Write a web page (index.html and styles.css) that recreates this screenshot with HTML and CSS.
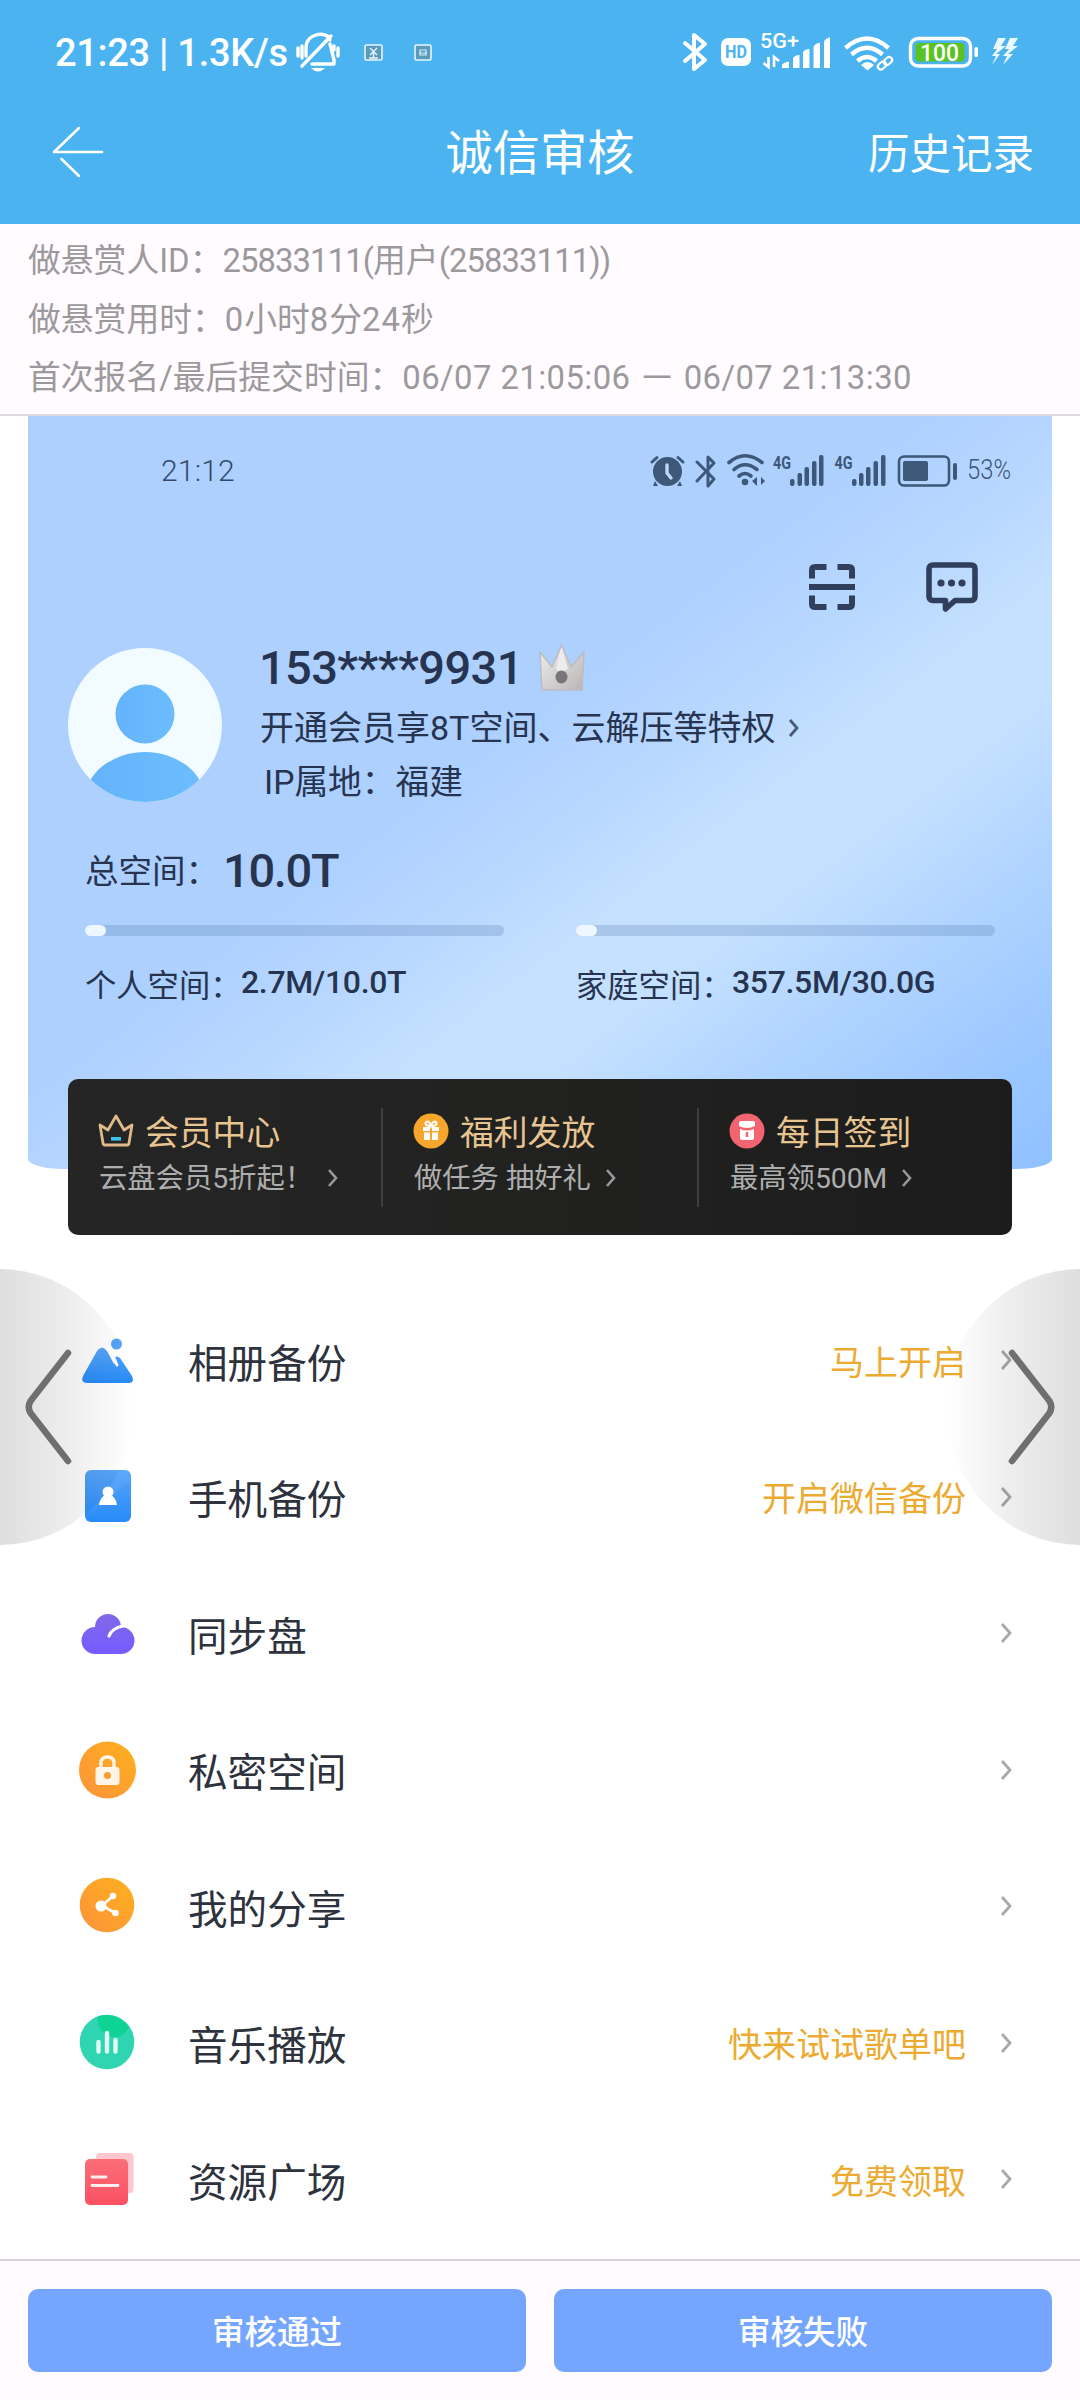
FILE: index.html
```html
<!DOCTYPE html>
<html lang="zh-CN">
<head>
<meta charset="utf-8">
<title>诚信审核</title>
<link rel="stylesheet" href="styles.css">
</head>
<body>
<div class="screen">
  <header class="top">
    <div class="sysbar">
      <span class="clock">21:23 | 1.3K/s</span>
      <svg class="sys-left" width="140" height="44" viewBox="294 30 140 44">
        <g fill="none" stroke="#fff" stroke-width="3.4" stroke-linecap="round" stroke-linejoin="round">
          <path d="M306 56V48C306 32 328 31 330 40M330 44L334 60V64H312M302 66L331 36M298 48V56M302 46V58M338 48V56M334 46V50"/>
        </g>
        <path d="M311 68H325Q318 75 311 68Z" fill="#fff"/>
        <g fill="#5b9abb" stroke="#e6f6ff" stroke-width="1.6">
          <rect x="365" y="45" width="17" height="15" rx="1.5"/>
          <rect x="415" y="45" width="16" height="15" rx="1.5"/>
        </g>
        <path d="M370 48L377 55M377 48L370 55M373.500 51V58M369 58H378" stroke="#e6f6ff" stroke-width="1.4"/>
        <path d="M420 50H426V55H420ZM419 53H427" fill="none" stroke="#d4eefb" stroke-width="1.2"/>
      </svg>
      <svg class="sys-right" width="340" height="44" viewBox="682 30 340 44">
        <path d="M685 43L705 60L694 69V35L705 44L685 61" fill="none" stroke="#fff" stroke-width="4" stroke-linejoin="round" stroke-linecap="round"/>
        <rect x="721" y="38" width="30" height="28" rx="7" fill="#fff"/>
        <text x="725" y="58" class="svg-hd" textLength="22" lengthAdjust="spacingAndGlyphs">HD</text>
        <text x="760" y="48" class="svg-5g" textLength="39" lengthAdjust="spacingAndGlyphs">5G+</text>
        <path d="M768.500 57V67L763.500 63M774 67V57L779 61" fill="none" stroke="#fff" stroke-width="2.600"/>
        <g fill="#fff">
          <path d="M782 68V65Q784 62 789 61.500V68ZM793 68V58Q795 55 799.500 55V68ZM803 68V52Q805 49 809.500 49V68ZM813.500 68V47Q815 43 820 43V68ZM824 68V42Q825 38 830 37.500V68Z"/>
          <path d="M861 65Q867.500 59 874 65L867.500 70.500Z"/>
        </g>
        <g fill="none" stroke="#fff" stroke-width="4.400">
          <path d="M845.500 48Q867 29 888.500 48"/><path d="M851.500 54.500Q867 41 882.500 54.500"/><path d="M857.500 61Q867 53 876.500 61"/>
        </g>
        <g fill="none" stroke="#4bb4f0" stroke-width="6"><path d="M880 68L891 59"/></g>
        <g fill="none" stroke="#fff" stroke-width="2.200">
          <rect x="877.500" y="62.500" width="9" height="6" rx="3" transform="rotate(-42 882 65.500)"/>
          <rect x="883.500" y="58" width="9" height="6" rx="3" transform="rotate(-42 888 61)"/>
        </g>
        <rect x="910.500" y="38.500" width="60" height="27.500" rx="7.500" fill="none" stroke="#fff" stroke-width="3.400"/>
        <rect x="915.500" y="43" width="49" height="18.500" rx="3" fill="#58c322"/>
        <text x="920" y="61" class="svg-100" textLength="39" lengthAdjust="spacingAndGlyphs">100</text>
        <rect x="974.500" y="47" width="3.500" height="10" rx="1.500" fill="#fff"/>
        <path d="M998 38H1006L1001 46H1006L996 54H1000L992 65L996 56H992L997 49H993ZM1010 38H1018L1013 46H1018L1008 54H1013L1003 65L1007 56H1003L1009 49H1005Z" fill="#eaf8ff"/>
      </svg>
    </div>
    <nav class="titlebar">
      <svg class="back" width="54" height="54" viewBox="51 125 54 54"><path d="M79 128L54 152H102M61.500 159L79 176" fill="none" stroke="#fff" stroke-width="2.600" stroke-linecap="round" stroke-linejoin="round"/></svg>
      <h1>诚信审核</h1>
      <a class="history">历史记录</a>
    </nav>
  </header>

  <section class="info">
    <p>做悬赏人ID：<span class="num-tight">25833111(</span>用户<span class="num-tight">(25833111))</span></p>
    <p>做悬赏用时：<span class="num">0</span>小时<span class="num">8</span>分<span class="num">24</span>秒</p>
    <p>首次报名/最后提交时间：<span class="num-date">06/07 21:05:06 <span class="dash">—</span> 06/07 21:13:30</span></p>
  </section>

  <main class="shot">
    <section class="hero">
      <div class="hero-status">
        <span class="hero-time">21:12</span>
        <svg width="380" height="40" viewBox="648 452 380 40">
          <g fill="#3d5878">
            <circle cx="667.500" cy="472.500" r="14.500"/>
            <path d="M655 482L653 487H658ZM680 482L682 487H677Z"/>
            <circle cx="745" cy="483" r="3.300"/>
            <path d="M752 482L757 478V487ZM761 478L765 482L761 486Z"/>
            <rect x="790" y="480" width="4.500" height="7" rx="2"/><rect x="797.500" y="474" width="4.500" height="13" rx="2"/><rect x="804.500" y="468" width="4.500" height="19" rx="2"/><rect x="812" y="462" width="4.500" height="25" rx="2"/><rect x="819" y="456" width="4.500" height="31" rx="2"/>
            <rect x="852" y="480" width="4.500" height="7" rx="2"/><rect x="859" y="474" width="4.500" height="13" rx="2"/><rect x="866" y="468" width="4.500" height="19" rx="2"/><rect x="873.500" y="462" width="4.500" height="25" rx="2"/><rect x="881" y="456" width="4.500" height="31" rx="2"/>
            <rect x="903" y="462" width="25" height="20" rx="2"/>
            <rect x="953" y="464" width="4" height="17" rx="2"/>
          </g>
          <g fill="none" stroke="#3d5878" stroke-width="3" stroke-linecap="round">
            <path d="M652 463L657 458.500M683 463L678 458.500"/>
            <path d="M667 466V474L671 479" stroke="#bcd8ff" stroke-width="3.400"/>
            <path d="M697 463L714 480L708 487V458L714 464L697 482" stroke-linejoin="round"/>
            <path d="M729 463.500Q745 450 762 463.500" stroke-width="3.600"/><path d="M734 470.500Q745 461 757 470.500" stroke-width="3.600"/><path d="M739 477Q745 472 751 477" stroke-width="3.600"/>
            <rect x="899" y="457.500" width="50" height="29" rx="5" stroke-width="2.600"/>
          </g>
          <text x="773" y="470" class="svg-4g" textLength="18" lengthAdjust="spacingAndGlyphs">4G</text>
          <text x="834.500" y="470" class="svg-4g" textLength="18" lengthAdjust="spacingAndGlyphs">4G</text>
          <text x="967" y="480" class="svg-53" textLength="44" lengthAdjust="spacingAndGlyphs">53%</text>
        </svg>
      </div>
      <div class="tools">
        <svg width="46" height="46" viewBox="0 0 46 46"><path d="M3 14.500V6Q3 3 6 3H17.500M28.500 3H40Q43 3 43 6V14.500M3 31.500V40Q3 43 6 43H17.500M28.500 43H40Q43 43 43 40V31.500M0 23H46" fill="none" stroke="#30405c" stroke-width="6"/></svg>
        <svg width="52" height="50" viewBox="0 0 52 50"><path d="M7 3H45Q49 3 49 7V34Q49 38.500 45 38.500H29L19.500 47V38.500H7Q3 38.500 3 34V7Q3 3 7 3Z" fill="none" stroke="#30405c" stroke-width="5.600" stroke-linejoin="round"/><g fill="#30405c"><circle cx="15" cy="21" r="3.600"/><circle cx="25.500" cy="21" r="3.600"/><circle cx="36" cy="21" r="3.600"/></g></svg>
      </div>
      <div class="profile">
        <svg class="avatar" width="154" height="154" viewBox="0 0 154 154">
          <defs>
            <clipPath id="face"><circle cx="77" cy="77" r="77"/></clipPath>
            <linearGradient id="skin"><stop offset="0" stop-color="#64b3fb"/><stop offset="1" stop-color="#6cbdff"/></linearGradient>
          </defs>
          <g clip-path="url(#face)"><rect width="154" height="154" fill="#f2fbff"/><circle cx="77" cy="66" r="29.500" fill="url(#skin)"/><ellipse cx="77" cy="152" rx="60" ry="48" fill="url(#skin)"/></g>
        </svg>
        <div class="who">
          <div class="phone"><span>153****9931</span>
            <svg width="46" height="48" viewBox="0 0 46 48"><defs><linearGradient id="silver" x2="1" y2="1"><stop offset="0" stop-color="#f1f0f1"/><stop offset="1" stop-color="#b9b4b4"/></linearGradient></defs><path d="M1 8L13 23L22.500 1L32 23L45 8L43 46H3Z" fill="url(#silver)" stroke="#bcbcc0" stroke-width="1.500" stroke-linejoin="round"/><path d="M22.500 3L17 25L22.500 28L29 25Z" fill="#eeedee"/><ellipse cx="22.500" cy="33" rx="6" ry="6.500" fill="#76767a"/></svg>
          </div>
          <div class="vip">开通会员享8T空间、云解压等特权<svg width="12" height="20" viewBox="0 0 12 20"><path d="M2 2L9 10L2 18" fill="none" stroke="#4b5978" stroke-width="2.800"/></svg></div>
          <div class="ip">IP属地：福建</div>
        </div>
      </div>
      <div class="total"><span>总空间：</span><b>10.0T</b></div>
      <div class="quotas">
        <div class="quota"><div class="bar"><i></i></div><div class="quota-text"><span>个人空间：</span><b>2.7M/10.0T</b></div></div>
        <div class="quota"><div class="bar"><i></i></div><div class="quota-text"><span>家庭空间：</span><b>357.5M/30.0G</b></div></div>
      </div>
    </section>

    <section class="promo">
      <div class="deal">
        <div class="deal-title"><svg width="36" height="36" viewBox="0 0 36 36"><path d="M2 12L10 17L18 3L26 17L34 12L31 30Q31 32 29 32H7Q5 32 5 30Z" fill="none" stroke="#dfb98a" stroke-width="2.800" stroke-linejoin="round"/><rect x="13" y="24" width="10" height="3.600" fill="#38c6e6"/></svg><span>会员中心</span></div>
        <div class="deal-sub"><span>云盘会员5折起！</span><svg width="12" height="20" viewBox="0 0 12 20"><path d="M2 2L9 10L2 18" fill="none" stroke="#999" stroke-width="2.600"/></svg></div>
      </div>
      <div class="deal">
        <div class="deal-title"><svg width="36" height="36" viewBox="0 0 36 36"><circle cx="18" cy="18" r="17.500" fill="#f7a62d"/><path d="M10 14H17V18H10ZM19 14H26V18H19ZM11 19.500H17V27H11ZM19 19.500H25V27H19Z" fill="#fff"/><path d="M18 13Q11 13 13 9Q16 7 18 13Q20 7 23 9Q25 13 18 13" fill="none" stroke="#fff" stroke-width="2"/></svg><span>福利发放</span></div>
        <div class="deal-sub"><span>做任务 抽好礼</span><svg width="12" height="20" viewBox="0 0 12 20"><path d="M2 2L9 10L2 18" fill="none" stroke="#999" stroke-width="2.600"/></svg></div>
      </div>
      <div class="deal">
        <div class="deal-title"><svg width="36" height="36" viewBox="0 0 36 36"><circle cx="18" cy="18" r="17.500" fill="#f26470"/><path d="M10 10Q10 8 12 8H24Q26 8 26 10V13Q18 17 10 13ZM11 16Q18 19 25 16V25Q25 27 23 27H13Q11 27 11 25Z" fill="#fff"/><path d="M18 19V24" stroke="#f26470" stroke-width="2.500"/></svg><span>每日签到</span></div>
        <div class="deal-sub"><span>最高领500M</span><svg width="12" height="20" viewBox="0 0 12 20"><path d="M2 2L9 10L2 18" fill="none" stroke="#999" stroke-width="2.600"/></svg></div>
      </div>
    </section>

    <ul class="menu">
      <li><svg class="ico" width="60" height="60" viewBox="0 0 60 60"><defs><linearGradient id="blue" x2="0" y2="1"><stop offset="0" stop-color="#58a5f8"/><stop offset="1" stop-color="#278bfa"/></linearGradient></defs><circle cx="38.500" cy="14" r="5.500" fill="#56a3f5"/><path d="M19 21Q24 14 29 21L36 34L38 33L35 28Q39 25 42 28L54 46Q57 53 51 53H9Q2 53 5 46Z" fill="url(#blue)"/><path d="M36 28L39 35" stroke="#fff" stroke-width="3" stroke-linecap="round"/></svg><span class="name">相册备份</span><span class="hint">马上开启</span><svg class="go" width="12" height="22" viewBox="0 0 12 22"><path d="M2 2L10 11L2 20" fill="none" stroke="#a9a9ab" stroke-width="2.800"/></svg></li>
      <li><svg class="ico" width="60" height="60" viewBox="0 0 60 60"><rect x="7" y="3" width="46" height="52" rx="6" fill="url(#blue)"/><path d="M32 3H47Q53 3 53 9V12L8 50Q30 28 41 3Z" fill="#6fb2ff" opacity=".25"/><circle cx="30" cy="25" r="5.500" fill="#fff"/><path d="M27 28H33Q38 31 39 38H21Q22 31 27 28Z" fill="#fff"/></svg><span class="name">手机备份</span><span class="hint">开启微信备份</span><svg class="go" width="12" height="22" viewBox="0 0 12 22"><path d="M2 2L10 11L2 20" fill="none" stroke="#a9a9ab" stroke-width="2.800"/></svg></li>
      <li><svg class="ico" width="60" height="60" viewBox="0 0 60 60"><defs><linearGradient id="violet" x2="0" y2="1"><stop offset="0" stop-color="#8168e8"/><stop offset="1" stop-color="#755cff"/></linearGradient></defs><path d="M17 51A13.500 13.500 0 0 1 17 24A13 13 0 0 1 43 24A13.500 13.500 0 0 1 43 51Z" fill="url(#violet)"/><path d="M31 33Q34 25 45 23" fill="none" stroke="#fff" stroke-width="3.200" stroke-linecap="round"/></svg><span class="name">同步盘</span><svg class="go" width="12" height="22" viewBox="0 0 12 22"><path d="M2 2L10 11L2 20" fill="none" stroke="#a9a9ab" stroke-width="2.800"/></svg></li>
      <li><svg class="ico" width="60" height="60" viewBox="0 0 60 60"><defs><linearGradient id="amber" x1="1" x2="0" y2="1"><stop offset="0" stop-color="#ffb11e"/><stop offset="1" stop-color="#fc923b"/></linearGradient></defs><circle cx="29.500" cy="30" r="28.500" fill="url(#amber)"/><rect x="17.500" y="27" width="24" height="18" rx="3" fill="#fff5e6"/><path d="M23 27V23Q23 17 29.500 17Q36 17 36 23V27" fill="none" stroke="#fff5e6" stroke-width="3.400"/><circle cx="29.500" cy="35.500" r="3.500" fill="#fb9b2e"/></svg><span class="name">私密空间</span><svg class="go" width="12" height="22" viewBox="0 0 12 22"><path d="M2 2L10 11L2 20" fill="none" stroke="#a9a9ab" stroke-width="2.800"/></svg></li>
      <li><svg class="ico" width="60" height="60" viewBox="0 0 60 60"><circle cx="29" cy="29" r="27.300" fill="url(#amber)"/><path d="M35 20L24 29.500L37 37" fill="none" stroke="#fff" stroke-width="2.600"/><g fill="#fff"><circle cx="23" cy="30" r="5.500"/><circle cx="35" cy="20" r="3.200"/><circle cx="37.500" cy="37" r="3.200"/></g></svg><span class="name">我的分享</span><svg class="go" width="12" height="22" viewBox="0 0 12 22"><path d="M2 2L10 11L2 20" fill="none" stroke="#a9a9ab" stroke-width="2.800"/></svg></li>
      <li><svg class="ico" width="60" height="60" viewBox="0 0 60 60"><circle cx="29" cy="29" r="27.300" fill="#2fd5b0"/><path d="M20 3.500Q38 -2 51 14Q46 25 34 24Q19 20 20 3.500Z" fill="#0fd393"/><path d="M20.500 29V38.500M29 20V38.500M37.500 27V38.500" stroke="#e0fff6" stroke-width="4.400" stroke-linecap="round"/></svg><span class="name">音乐播放</span><span class="hint">快来试试歌单吧</span><svg class="go" width="12" height="22" viewBox="0 0 12 22"><path d="M2 2L10 11L2 20" fill="none" stroke="#a9a9ab" stroke-width="2.800"/></svg></li>
      <li><svg class="ico" width="60" height="60" viewBox="0 0 60 60"><defs><linearGradient id="rose" x2="0" y2="1"><stop offset="0" stop-color="#fa6e78"/><stop offset="1" stop-color="#fc5162"/></linearGradient></defs><rect x="18" y="4" width="37.500" height="40" rx="4" fill="#ffc6cf"/><rect x="7" y="10" width="43" height="46" rx="5" fill="url(#rose)"/><path d="M14 28H28M14 36.500H40" stroke="#ffeef0" stroke-width="2.800" stroke-linecap="round"/></svg><span class="name">资源广场</span><span class="hint">免费领取</span><svg class="go" width="12" height="22" viewBox="0 0 12 22"><path d="M2 2L10 11L2 20" fill="none" stroke="#a9a9ab" stroke-width="2.800"/></svg></li>
    </ul>
    <div class="pager prev"><svg width="134" height="276" viewBox="0 0 134 276"><path d="M68 84L30.500 132Q27 138 30.500 144L68 192" fill="none" stroke="#6f6f6f" stroke-width="6.500" stroke-linecap="round"/></svg></div>
    <div class="pager next"><svg width="134" height="276" viewBox="0 0 134 276"><path d="M66 84L103.500 132Q107 138 103.500 144L66 192" fill="none" stroke="#6f6f6f" stroke-width="6.500" stroke-linecap="round"/></svg></div>
  </main>

  <footer class="actions">
    <button>审核通过</button>
    <button>审核失败</button>
  </footer>
</div>
</body>
</html>
```
FILE: styles.css
```css
* { box-sizing: border-box; margin: 0; padding: 0; }
body { width: 1080px; background: #fff; font-family: Roboto, "Noto Sans CJK SC", sans-serif; color: #2d323d; }
svg { display: block; flex: none; }
.screen { width: 1080px; height: 2400px; display: flex; flex-direction: column; overflow: hidden; }

.top { height: 224px; padding-bottom: 20px; background: #4bb4f0; color: #fff; }
.sysbar { height: 104px; display: flex; align-items: center; padding: 0 58px 0 54px; }
.clock { width: 240px; padding: 1px 0 0 1px; font-size: 38px; font-weight: 500; white-space: nowrap; letter-spacing: -.3px; }
.sys-right { margin-left: auto; }
.svg-hd { font-size: 18px; font-weight: 700; fill: #4bb4f0; }
.svg-5g { font-size: 20px; font-weight: 500; fill: #fff; }
.svg-100 { font-size: 24px; font-weight: 500; fill: #fff; }
.titlebar { height: 96px; display: grid; grid-template-columns: 1fr auto 1fr; align-items: center; padding: 0 46px 0 51px; }
.titlebar h1 { padding-bottom: 5px; margin-left: -5px; font-size: 47.200px; font-weight: 400; }
.history { justify-self: end; padding-bottom: 3px; font-size: 41.500px; }

.info { height: 192px; padding-top: 9px; padding-left: 28px; background: #fffbff; border-bottom: 2px solid #dcd9df; color: #9b999c; font-size: 32.800px; }
.info p { height: 58.700px; line-height: 57.500px; white-space: nowrap; }
.num { letter-spacing: 1px; }
.num-tight { letter-spacing: -.900px; }
.num-date { letter-spacing: .45px; }
.dash { display: inline-block; transform: scaleX(1.25); margin: 0 5px; }

.shot { position: relative; height: 1843px; background: #fff; }
.hero { height: 753px; margin: 0 28px; border-radius: 0 0 36px 36px / 0 0 10px 10px; background: linear-gradient(143deg, #add0ff 0%, #add0ff 44%, #b9d8ff 54%, #c5e1ff 62%, #c4e0ff 69%, #b0d4ff 79%, #9dc8ff 90%, #8fc1ff 100%); color: #26344f; }
.hero-status { height: 110px; display: flex; align-items: center; justify-content: space-between; padding: 0 24px 0 133px; }
.hero-time { padding-bottom: 1px; font-size: 30px; font-weight: 300; letter-spacing: .2px; color: #33496a; }
.svg-4g { font-size: 18px; font-weight: 700; fill: #3d5878; }
.svg-53 { font-size: 28px; font-weight: 300; fill: #3d5878; }
.tools { height: 122px; display: flex; align-items: center; justify-content: flex-end; gap: 71px; padding-right: 74px; }
.profile { height: 154px; display: flex; gap: 38px; padding-left: 40px; }
.who { flex: 1; white-space: nowrap; }
.phone { height: 40px; display: flex; align-items: center; gap: 24px; font-size: 47px; font-weight: 500; line-height: 40px; }
.phone span { width: 256px; margin-left: -1px; letter-spacing: -.6px; }
.vip { height: 80px; line-height: 82px; display: flex; align-items: center; gap: 13px; font-size: 34px; }
.ip { height: 28px; line-height: 30px; padding-left: 4px; font-size: 33.700px; }
.total { height: 76px; margin-top: 30px; padding-left: 57px; display: flex; align-items: center; font-size: 33.500px; }
.total span { width: 138px; padding-bottom: 3px; white-space: nowrap; }
.total b { font-size: 47px; font-weight: 500; letter-spacing: -1.300px; }
.quotas { display: flex; gap: 72px; margin-top: 17px; padding-left: 57px; }
.quota { width: 419px; }
.bar { height: 11px; border-radius: 6px; background: rgba(100, 135, 185, .3); }
.bar i { display: block; width: 21px; height: 11px; border-radius: 6px; background: #eef6ff; }
.quota-text { margin-top: 29px; height: 40px; display: flex; align-items: center; font-size: 31.300px; white-space: nowrap; }
.quota-text span { width: 156px; padding-bottom: 4px; }
.quota-text b { font-size: 32px; font-weight: 500; padding-bottom: 7px; letter-spacing: -.350px; }

.promo { position: relative; height: 156px; margin: -90px 68px 0; padding: 29px 0 28px; display: grid; grid-template-columns: 313px 316px 315px; border-radius: 10px; background: linear-gradient(90deg, #252525, #212220 50%, #1b1c1b); }
.deal { padding-left: 30px; white-space: nowrap; }
.deal + .deal { border-left: 2px solid #3c3f43; }
.deal-title { height: 46px; display: flex; align-items: center; gap: 11px; font-size: 33.800px; color: #e8c590; }
.deal-title span { padding-bottom: 1px; }
.deal-sub { height: 46px; display: flex; align-items: center; gap: 14px; padding-left: 1px; font-size: 28.300px; color: #aeaeae; }
.deal-sub span { padding-bottom: 3px; }
.deal-sub svg { margin-top: 2px; }

.menu { list-style: none; padding-top: 60px; }
.menu li { height: 136.500px; display: flex; align-items: center; padding: 0 68px 0 78px; }
.ico { margin-top: -6px; }
.name { margin-left: 50px; padding-bottom: 6px; font-size: 39.600px; }
.hint { margin-left: auto; padding-bottom: 6px; font-size: 34px; color: #ecaa30; }
.go { margin: -6px 0 0 34px; }
.name + .go { margin-left: auto; }

.pager { position: absolute; top: 853px; width: 134px; height: 276px; }
.prev { left: 0; border-radius: 0 134px 134px 0 / 0 138px 138px 0; background: linear-gradient(90deg, rgba(0, 0, 0, .13), rgba(0, 0, 0, .07) 50%, rgba(0, 0, 0, 0)); }
.next { right: 0; border-radius: 134px 0 0 134px / 138px 0 0 138px; background: linear-gradient(270deg, rgba(0, 0, 0, .13), rgba(0, 0, 0, .07) 50%, rgba(0, 0, 0, 0)); }

.actions { flex: 1; display: flex; gap: 28px; align-items: flex-start; padding: 28px 28px 0; border-top: 2px solid #d5d2da; background: #fffbff; }
.actions button { flex: 1; height: 83px; padding-bottom: 3px; border: 0; border-radius: 10px; background: #74a5ff; color: #fff; font: 500 32.500px Roboto, "Noto Sans CJK SC", sans-serif; }
```
